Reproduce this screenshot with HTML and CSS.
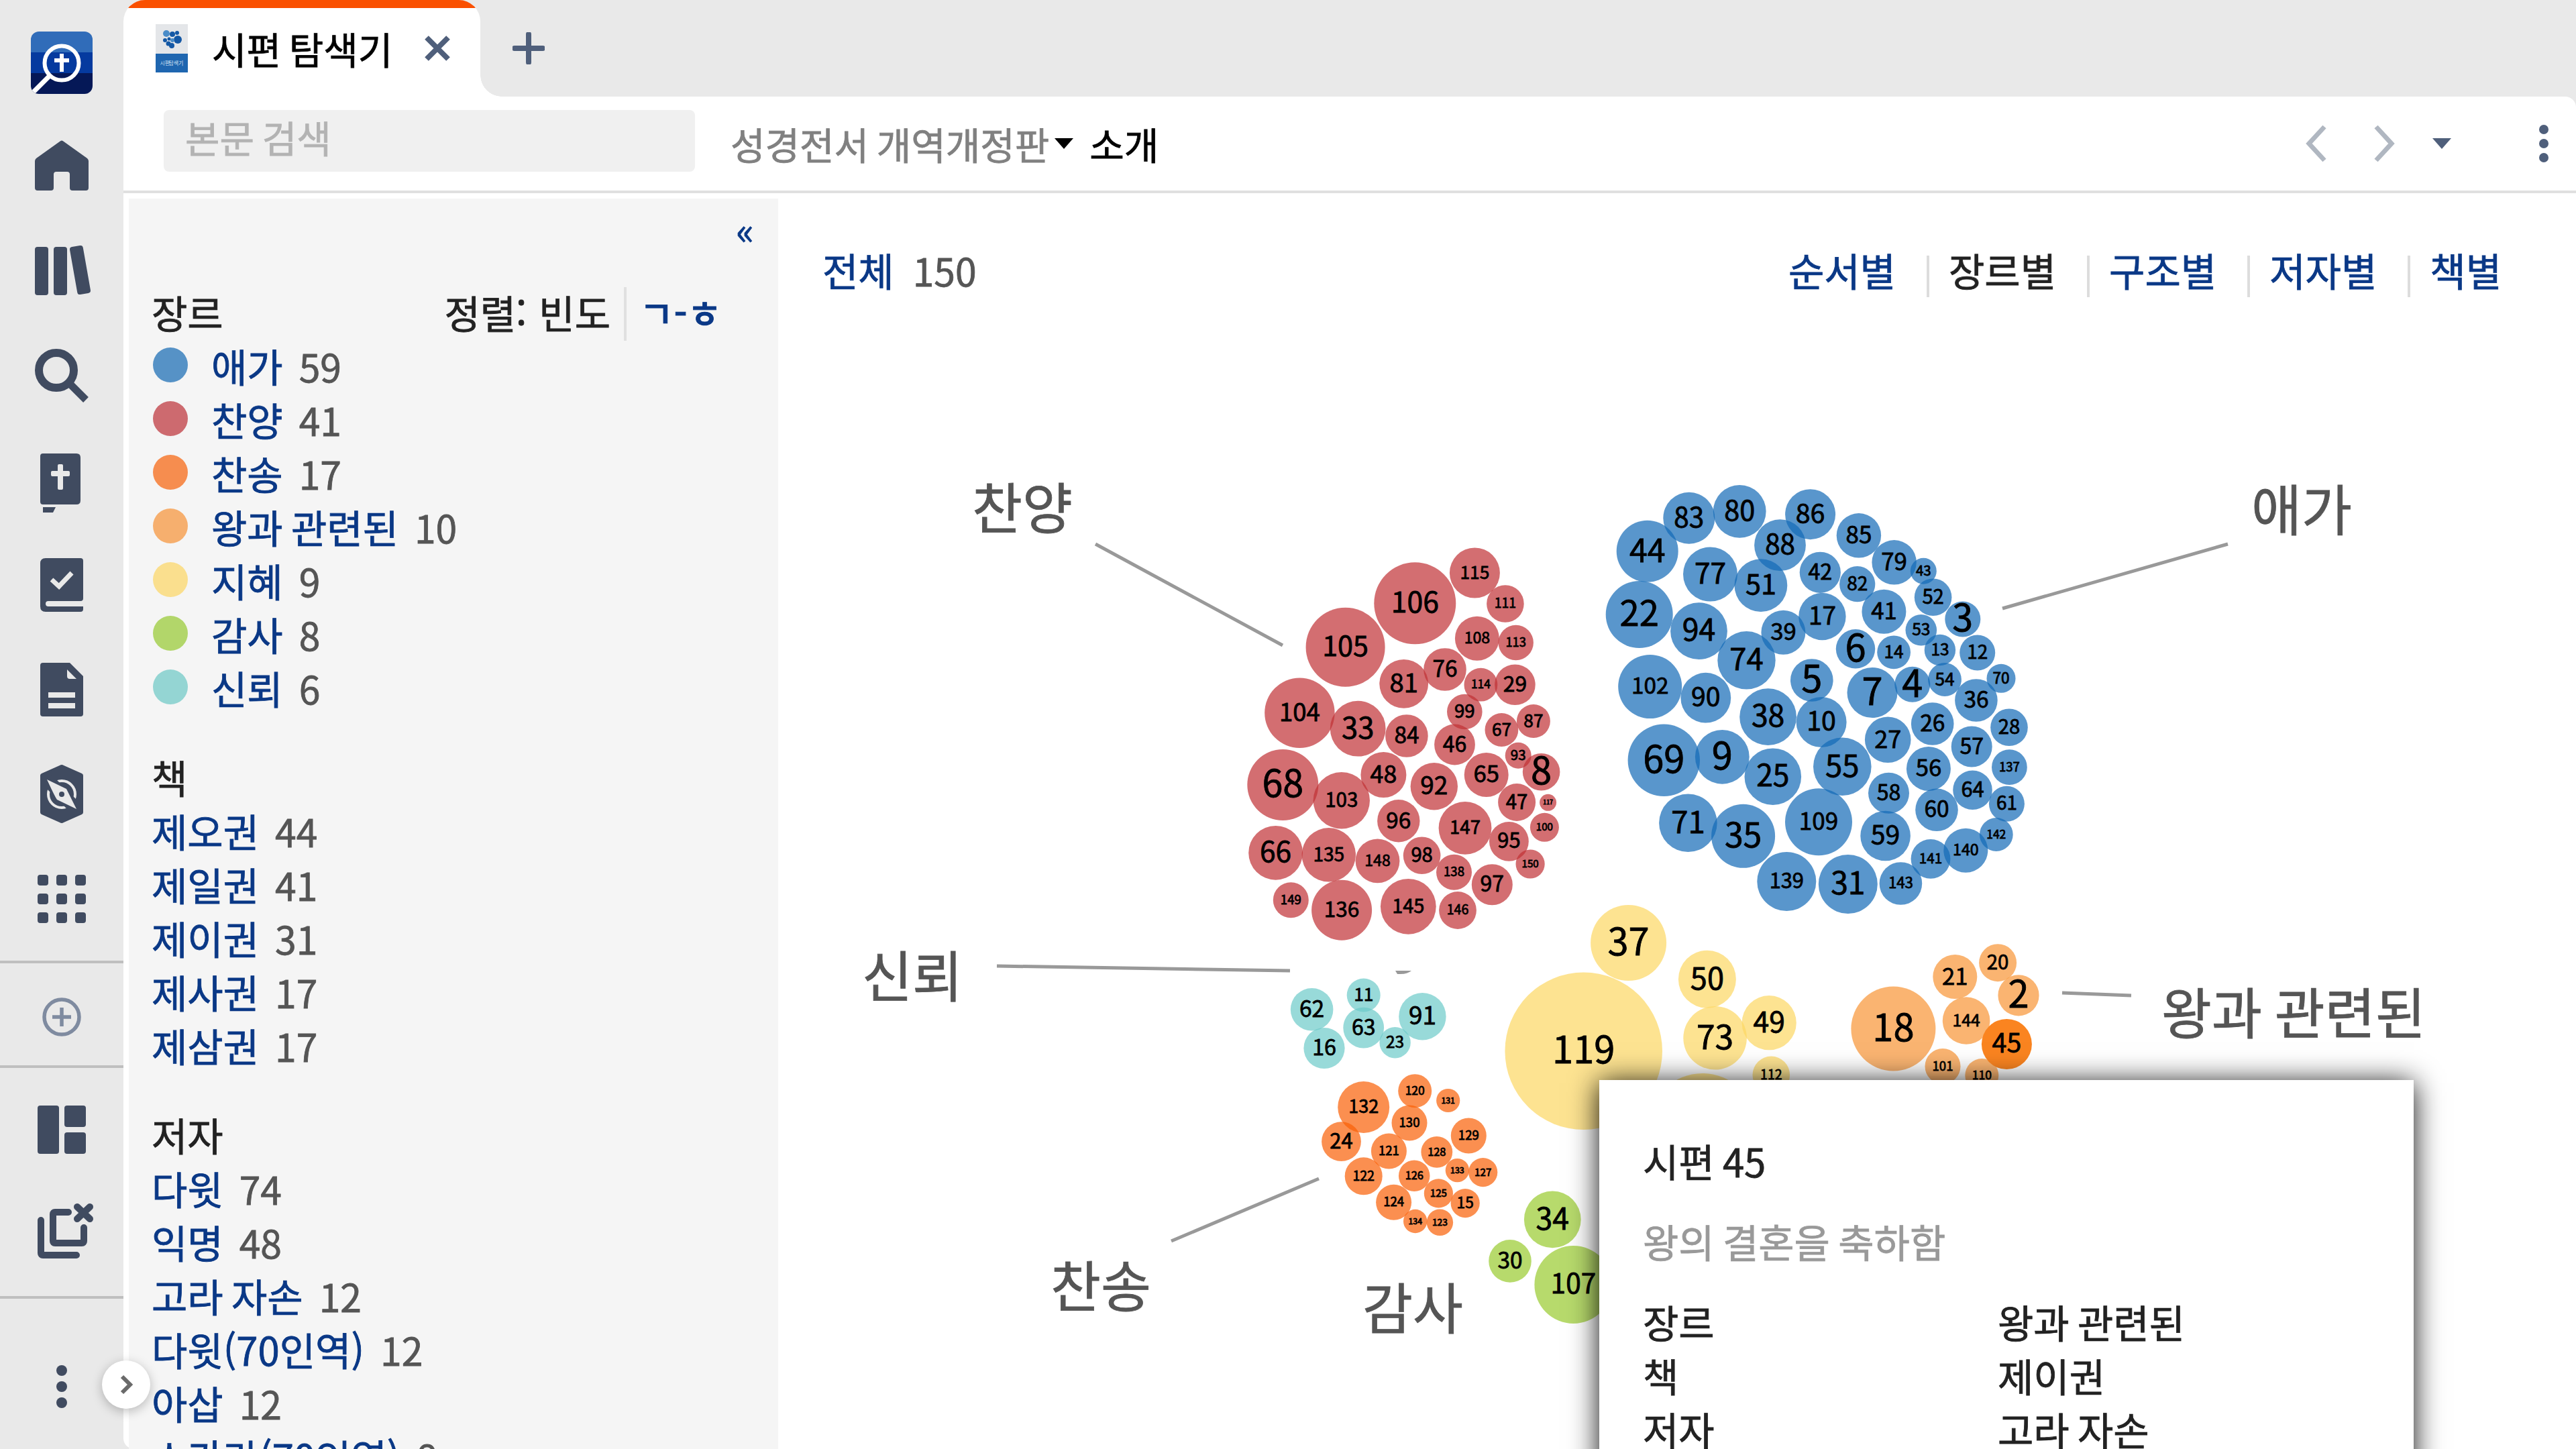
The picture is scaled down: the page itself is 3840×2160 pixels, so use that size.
FILE: index.html
```
<!DOCTYPE html>
<html lang="ko">
<head>
  <meta charset="UTF-8">
  <title>시편 탐색기</title>
  <link rel="stylesheet" href="styles.css">
</head>
<body>

<div class="app">
  <aside class="rail">
    <svg class="logo" viewBox="0 0 92 93">
      <clipPath id="logoClip"><rect width="92" height="93" rx="12"/></clipPath>
      <g clip-path="url(#logoClip)">
        <rect width="92" height="32" fill="#306cb9"/>
        <rect y="31" width="92" height="32" fill="#053a9f"/>
        <rect y="62" width="92" height="31" fill="#051857"/>
        <path d="M28 66L0 94" stroke="#fff" stroke-width="7"/>
        <circle cx="46" cy="47" r="25.5" fill="none" stroke="#fff" stroke-width="6"/>
        <path d="M46 33V60M35 43H57" stroke="#fff" stroke-width="6"/>
      </g>
    </svg>

    <nav class="rail-group">
      <svg class="icon" viewBox="0 0 96 96"><path d="M45 11q3-3 6 0L86 36q2 2 2 4V80q0 4-4 4H64q-4 0-4-4V60q0-4-4-4H40q-4 0-4 4V80q0 4-4 4H12q-4 0-4-4V40q0-2 2-4z"/></svg>
      <svg class="icon" viewBox="0 0 96 96"><rect x="8" y="12" width="20" height="72" rx="4"/><rect x="36" y="12" width="20" height="72" rx="4"/><rect x="65.500" y="10.500" width="20" height="72" rx="4" transform="rotate(-10 75.500 46.500)"/></svg>
      <svg class="icon" viewBox="0 0 96 96"><circle cx="40" cy="40" r="26" class="line thick"/><path d="M61 61L84 84" class="line thicker"/></svg>
      <svg class="icon" viewBox="0 0 96 96"><path d="M20 8H70q6 0 6 6V78q0 6-6 6H20q-4 0-4-4V12q0-4 4-4zM20 88H39L35 96H20z"/><path class="cut" d="M42 26q0-2 2-2h4q2 0 2 2v8h8q2 0 2 2v4q0 2-2 2h-8v18q0 2-2 2h-4q-2 0-2-2V42h-8q-2 0-2-2v-4q0-2 2-2h8z"/></svg>
      <svg class="icon" viewBox="0 0 96 96"><path d="M24 8H76q4 0 4 4V68q0 4-4 4H28q-4 0-4 4t4 4H80V84q0 4-4 4H24q-8 0-8-8V16q0-8 8-8z"/><path class="cutline" d="M33 40L44 50L63 30"/></svg>
      <svg class="icon" viewBox="0 0 96 96"><path d="M20 8H60L80 28V84q0 4-4 4H20q-4 0-4-4V12q0-4 4-4z"/><path class="cut" d="M56 18V28q0 4 4 4H70zM28 52H68V60H28zM28 68H68V76H28z"/></svg>
      <svg class="icon" viewBox="0 0 96 96"><path d="M45 5q3-2 6 0L78 17q2 1 2 3V75q0 2-2 3L51 90q-3 2-6 0L18 78q-2-1-2-3V20q0-2 2-3z"/><circle cx="48" cy="48" r="20" fill="none" stroke="#e9e9e9" stroke-width="4"/><path d="M26 26L70 70" stroke="#404b60" stroke-width="20"/><path class="cut" d="M26 26L55 40Q58 46 70 70L41 56Q38 52 26 26z"/><circle cx="48" cy="48" r="4"/></svg>
      <svg class="icon" viewBox="0 0 96 96"><path d="M12 16q0-4 4-4h8q4 0 4 4v8q0 4-4 4h-8q-4 0-4-4zM40 16q0-4 4-4h8q4 0 4 4v8q0 4-4 4h-8q-4 0-4-4zM68 16q0-4 4-4h8q4 0 4 4v8q0 4-4 4h-8q-4 0-4-4zM12 44q0-4 4-4h8q4 0 4 4v8q0 4-4 4h-8q-4 0-4-4zM40 44q0-4 4-4h8q4 0 4 4v8q0 4-4 4h-8q-4 0-4-4zM68 44q0-4 4-4h8q4 0 4 4v8q0 4-4 4h-8q-4 0-4-4zM12 72q0-4 4-4h8q4 0 4 4v8q0 4-4 4h-8q-4 0-4-4zM40 72q0-4 4-4h8q4 0 4 4v8q0 4-4 4h-8q-4 0-4-4zM68 72q0-4 4-4h8q4 0 4 4v8q0 4-4 4h-8q-4 0-4-4z"/></svg>
    </nav>

    <div class="rail-group rail-add">
      <svg class="icon" viewBox="0 0 96 96"><path d="M48 34V62M34 48H62" class="add"/><circle cx="48" cy="48" r="26" class="add"/></svg>
    </div>

    <div class="rail-group">
      <svg class="icon" viewBox="0 0 96 96"><rect x="12" y="12" width="32" height="72" rx="4"/><rect x="52" y="12" width="32" height="32" rx="4"/><rect x="52" y="52" width="32" height="32" rx="4"/></svg>
      <svg class="icon" viewBox="0 0 96 96"><path class="line" d="M58 15H38q-3 0-3 3V58q0 3 3 3H78q3 0 3-3V38M17 27V76q0 3 3 3H70M71 7L90 25M90 7L71 25"/></svg>
    </div>

    <div class="rail-group rail-more">
      <svg class="icon" viewBox="0 0 96 96"><circle cx="48" cy="24" r="8"/><circle cx="48" cy="48" r="8"/><circle cx="48" cy="72" r="8"/></svg>
    </div>

    <div class="expand">
      <svg width="20" height="32" viewBox="0 0 20 32"><path d="M4 4L16 16L4 28" fill="none" stroke="#6a6a6a" stroke-width="6"/></svg>
    </div>
  </aside>

  <div class="window">
    <div class="tabs">
      <div class="tab">
        <svg class="cover" viewBox="0 0 48 72">
          <rect width="48" height="72" fill="#e4e6e9"/>
          <rect y="44" width="48" height="28" fill="#1f66b0"/>
          <g fill="#1458a5">
            <circle cx="16" cy="14" r="5" fill="#4a8cc8"/><circle cx="25" cy="15" r="4"/><circle cx="32" cy="13" r="3"/>
            <circle cx="33" cy="23" r="6"/><circle cx="14" cy="24" r="3"/><circle cx="20" cy="22" r="2.500"/>
            <circle cx="19" cy="29" r="3.500"/><circle cx="24" cy="32" r="4"/><circle cx="25" cy="24" r="3" fill="#4a8cc8"/>
          </g>
          <text x="24" y="61" class="cover-title">시편 탐색기</text>
        </svg>
        <span class="tab-title">시편 탐색기</span>
        <svg width="38" height="38" viewBox="0 0 38 38"><path d="M3 3L35 35M35 3L3 35" class="ctl"/></svg>
      </div>
      <div class="tab-curve"></div>
      <svg class="tab-add" width="48" height="48" viewBox="0 0 48 48"><path d="M24 3V45M3 24H45" class="ctl round"/></svg>
    </div>

    <div class="toolbar">
      <div class="search">본문 검색</div>
      <span class="bible">성경전서 개역개정판</span>
      <svg class="arrow" width="28" height="16" viewBox="0 0 28 16"><path d="M0 0H28L14 16z"/></svg>
      <span class="intro">소개</span>
      <div class="history">
        <svg width="32" height="56" viewBox="0 0 32 56"><path d="M29 3L6 28L29 53" class="chev"/></svg>
        <svg width="32" height="56" viewBox="0 0 32 56"><path d="M3 3L26 28L3 53" class="chev"/></svg>
        <svg width="28" height="16" viewBox="0 0 28 16"><path d="M0 0H28L14 16z" fill="#4f5f7b"/></svg>
        <svg class="more" width="16" height="60" viewBox="0 0 16 60" fill="#4f5f7b"><circle cx="8" cy="9" r="7"/><circle cx="8" cy="30" r="7"/><circle cx="8" cy="51" r="7"/></svg>
      </div>
    </div>

    <div class="content">
      <section class="facets">
        <div class="fold">«</div>

        <div class="facet">
          <div class="facet-head">
            <span>장르</span>
            <span class="sort">정렬: 빈도</span>
            <a class="alpha">ㄱ-ㅎ</a>
          </div>
          <div class="row"><i class="dot lament"></i><a>애가</a><span>59</span></div>
          <div class="row"><i class="dot praise"></i><a>찬양</a><span>41</span></div>
          <div class="row"><i class="dot hymn"></i><a>찬송</a><span>17</span></div>
          <div class="row"><i class="dot royal"></i><a>왕과 관련된</a><span>10</span></div>
          <div class="row"><i class="dot wisdom"></i><a>지혜</a><span>9</span></div>
          <div class="row"><i class="dot thanks"></i><a>감사</a><span>8</span></div>
          <div class="row"><i class="dot trust"></i><a>신뢰</a><span>6</span></div>
        </div>

        <div class="facet">
          <div class="facet-head">책</div>
          <div class="row"><a>제오권</a><span>44</span></div>
          <div class="row"><a>제일권</a><span>41</span></div>
          <div class="row"><a>제이권</a><span>31</span></div>
          <div class="row"><a>제사권</a><span>17</span></div>
          <div class="row"><a>제삼권</a><span>17</span></div>
        </div>

        <div class="facet">
          <div class="facet-head">저자</div>
          <div class="row"><a>다윗</a><span>74</span></div>
          <div class="row"><a>익명</a><span>48</span></div>
          <div class="row"><a>고라 자손</a><span>12</span></div>
          <div class="row"><a>다윗(70인역)</a><span>12</span></div>
          <div class="row"><a>아삽</a><span>12</span></div>
          <div class="row"><a>스가랴(70인역)</a><span>8</span></div>
        </div>
      </section>

      <main class="explorer">
        <div class="views">
          <a>전체</a><span class="total">150</span>
          <div class="modes">
            <a>순서별</a><a class="on">장르별</a><a>구조별</a><a>저자별</a><a>책별</a>
          </div>
        </div>
        <svg class="chart" viewBox="1160 480 2680 1680" id="chart">
          <g class="leaders">
            <path d="M1633 811L1912 962M3321 811L2985 907M1486 1440L1923 1447M1746 1850L1966 1757M3074 1480L3177 1484"/>
            <path class="bit" d="M2080 1447H2104Q2098 1452 2088 1452H2083z"/>
          </g>
          <g class="names">
            <text x="1449" y="788">찬양</text>
            <text x="3356" y="791">애가</text>
            <text x="1285" y="1486">신뢰</text>
            <text x="1566" y="1948">찬송</text>
            <text x="2031" y="1981">감사</text>
            <text x="3222" y="1541">왕과 관련된</text>
          </g>
        </svg>

        <div class="card">
          <div class="card-title">시편 45</div>
          <div class="card-sub">왕의 결혼을 축하함</div>
          <div class="card-rows">
            <span>장르</span><span>왕과 관련된</span>
            <span>책</span><span>제이권</span>
            <span>저자</span><span>고라 자손</span>
          </div>
        </div>
      </main>
    </div>
  </div>
</div>

<script src="script.js"></script>
</body>
</html>
```
FILE: styles.css
```
* {
  box-sizing: border-box;
}
body {
  margin: 0;
  background: #e9e9e9;
  color: #222;
  font-family: "Noto Sans CJK KR", sans-serif;
  font-size: 58px;
  word-spacing: -0.07em;
  -webkit-text-stroke: 0.8px;
  overflow: hidden;
}
svg {
  display: block;
  flex: none;
}
a {
  color: #0a3886;
}
.app {
  display: flex;
  width: 3840px;
  height: 2160px;
  overflow: hidden;
}

/* left rail */
.rail {
  position: relative;
  width: 184px;
  flex: none;
  padding-top: 47px;
  display: flex;
  flex-direction: column;
  align-items: center;
}
.logo {
  width: 92px;
  height: 93px;
  margin-bottom: 16px;
}
.rail-group {
  width: 184px;
  padding: 14px 44px;
  display: flex;
  flex-direction: column;
}
.rail-group + .rail-group {
  border-top: 4px solid #bfbfbf;
}
.icon {
  width: 96px;
  height: 96px;
  margin: 30px 0;
  fill: #404b60;
}
.icon .line {
  fill: none;
  stroke: #404b60;
  stroke-width: 10;
  stroke-linecap: round;
}
.rail .rail-add {
  height: 156px;
  padding-top: 2px;
  padding-bottom: 0;
}
.rail .rail-more {
  padding-top: 53px;
}
.icon .thick { stroke-width: 12; }
.icon .thicker { stroke-width: 11; stroke-linecap: butt; }
.icon .add { fill: none; stroke: #7f8ba0; stroke-width: 5.5; }
.icon .cut { fill: #e9e9e9; }
.icon .cutline { fill: none; stroke: #e9e9e9; stroke-width: 7; }
.expand {
  position: absolute;
  z-index: 2;
  left: 152px;
  top: 2028px;
  width: 72px;
  height: 72px;
  border-radius: 50%;
  background: #fff;
  box-shadow: 0 4px 16px rgba(0, 0, 0, 0.25);
  display: flex;
  align-items: center;
  justify-content: center;
}

/* tabs */
.window {
  flex: 1;
  display: flex;
  flex-direction: column;
}
.tabs {
  height: 144px;
  display: flex;
}
.tab {
  width: 532px;
  display: flex;
  align-items: center;
  padding: 0 45px 0 48px;
  border-radius: 32px 32px 0 0;
  background: linear-gradient(#fa5000 12px, #fff 12px);
}
.cover {
  width: 48px;
  height: 72px;
}
.cover-title {
  font-size: 8px;
  fill: #cfe0f2;
  text-anchor: middle;
}
.tab-title {
  margin-left: 36px;
  margin-right: auto;
  color: #000;
  font-size: 56px;
  line-height: 80px;
  padding-bottom: 1px;
}
.tab-curve {
  align-self: flex-end;
  width: 32px;
  height: 32px;
  background: radial-gradient(circle at 100% 0, transparent 31.5px, #fff 32px);
}
.tab-add {
  margin: 48px 0 0 16px;
}
.ctl {
  stroke: #4f5f7b;
  stroke-width: 8;
}
.round {
  stroke-linecap: round;
}

/* toolbar */
.toolbar {
  height: 144px;
  padding: 0 40px 0 60px;
  display: flex;
  align-items: center;
  background: #fff;
  border-bottom: 4px solid #e0e0e0;
  border-top-right-radius: 16px;
  font-size: 56px;
  line-height: 80px;
}
.search {
  width: 792px;
  height: 92px;
  margin-bottom: 8px;
  padding: 0 32px;
  border-radius: 8px;
  background: #f0f0f0;
  color: #b3b3b3;
}
.bible {
  margin-left: 53px;
  padding-bottom: 1px;
  color: #808080;
}
.arrow {
  margin-left: 8px;
}
.intro {
  margin-left: 24px;
  padding-bottom: 1px;
  color: #000;
}
.history {
  margin-left: auto;
  display: flex;
  align-items: center;
}
.history svg:nth-child(2) { margin-left: 71px; }
.history svg:nth-child(3) { margin-left: 55px; }
.history .more { margin-left: 130px; }
.chev {
  fill: none;
  stroke: #b0b7c1;
  stroke-width: 7;
}

/* facet list */
.content {
  flex: 1;
  display: flex;
  min-height: 0;
  background: #fff;
  border-bottom-left-radius: 16px;
}
.facets {
  width: 968px;
  margin: 8px 0 0 8px;
  padding: 0 34px;
  background: #f5f5f5;
  overflow: hidden;
}
.fold {
  height: 129px;
  padding: 10px 2px 0;
  line-height: 70px;
  text-align: right;
  color: #0a3886;
  font-size: 56px;
}
.facet {
  margin-bottom: 53px;
}
.facet-head,
.row {
  display: flex;
  height: 80px;
  line-height: 80px;
  white-space: nowrap;
}
.sort {
  margin-left: auto;
  padding-right: 20px;
  word-spacing: 0.03em;
}
.alpha {
  width: 196px;
  height: 80px;
  margin-top: 3px;
  padding-left: 19px;
  line-height: 74px;
  border-left: 4px solid #e0e0e0;
  font-size: 56px;
  font-weight: 500;
}
.row span {
  margin-left: 24px;
  color: #555;
  font-size: 57px;
}
.dot {
  width: 52px;
  height: 52px;
  margin: 13px 35px 0 2px;
  border-radius: 50%;
}
.dot.lament { background: #5692c6; }
.dot.praise { background: #cd6a6f; }
.dot.hymn { background: #f68d4f; }
.dot.royal { background: #f6af6e; }
.dot.wisdom { background: #fadf8e; }
.dot.thanks { background: #b2d66a; }
.dot.trust { background: #94d5d3; }

/* explorer */
.explorer {
  position: relative;
  flex: 1;
}
.views {
  display: flex;
  height: 192px;
  padding: 74px 111px 0 66px;
  line-height: 80px;
}
.total {
  margin-left: 28px;
  color: #555;
  font-size: 57px;
}
.modes {
  margin-left: auto;
  display: flex;
}
.modes a + a {
  margin-left: 46px;
  padding-left: 33px;
  background: linear-gradient(#ddd, #ddd) 0 19px / 4px 62px no-repeat;
}
.modes .on {
  color: #222;
}
.chart {
  width: 2680px;
  height: 1680px;
}
.leaders {
  fill: none;
  stroke: #999;
  stroke-width: 5;
}
.leaders .bit {
  fill: #999;
  stroke: none;
}
.names {
  font-size: 81.5px;
  fill: #555;
  stroke: #555;
  stroke-width: 0.8;
}
.bubble text {
  text-anchor: middle;
  stroke: #000;
  stroke-width: 0.8;
}
.bubble.lament { --c: #126ab7; }
.bubble.praise { --c: #c03034; }
.bubble.hymn { --c: #f96005; }
.bubble.royal { --c: #f89434; }
.bubble.wisdom { --c: #fcd763; }
.bubble.thanks { --c: #98cb2e; }
.bubble.trust { --c: #6ccac9; }
.bubble circle {
  fill: var(--c);
  fill-opacity: 0.7;
}
.bubble circle.active {
  fill: #fa8420;
  fill-opacity: 1;
}

/* hover card */
.card {
  position: absolute;
  left: 1224px;
  top: 1322px;
  width: 1214px;
  height: 700px;
  padding: 80px 65px;
  background: #fff;
  box-shadow: 0 4px 40px rgba(0, 0, 0, 0.95);
  line-height: 80px;
}
.card-sub {
  margin: 40px 0;
  color: #999;
}
.card-rows {
  display: grid;
  grid-template-columns: 529px 1fr;
}
```
FILE: script.js
```
// psalm, x, y, radius
const genres = {
  praise: [
    [115,2198.4,854,37.5],[106,2109.3,899.3,61],[111,2243.9,900,27.8],[105,2005.6,964.7,59],
    [108,2201.9,951.7,33],[113,2259.7,958,26.2],[76,2154,998,31.8],[81,2092.7,1019.3,36.4],
    [114,2207.4,1020.7,24.9],[29,2258.4,1020.7,30.3],[104,1937.4,1062.7,52.2],[33,2024.2,1086.2,41.4],
    [84,2096.9,1097,31.8],[99,2183.3,1061,26.3],[67,2238.4,1088,24.9],[87,2285.9,1075,25],
    [46,2168.5,1110,30.4],[93,2263.2,1126.3,19.5],[68,1912.3,1170,53],[103,1999.8,1193.3,42.2],
    [48,2062.4,1155,34],[92,2137.8,1172.3,35.2],[65,2215.7,1155,33],[8,2297.6,1150.7,27.8],
    [47,2261.1,1196,28],[117,2307.6,1196.3,12.5],[96,2084.8,1223.7,31.7],[147,2184,1234.3,39.4],
    [95,2249.4,1254.3,29.4],[100,2302.4,1233.3,21.5],[66,1901.6,1271.3,40.4],[135,1980.8,1274.3,40.2],
    [148,2053.5,1283.3,32.9],[98,2119.6,1275.3,27.8],[138,2167.5,1300.3,26.5],[150,2281.1,1288,21.6],
    [97,2224.3,1318.7,30.5],[149,1924.3,1341.7,26.5],[136,2000.1,1356.7,45],[145,2099.3,1351.3,41.4],
    [146,2173,1357,27.9]
  ],
  lament: [
    [83,2517.8,772.3,38.5],[80,2593.2,762.3,39.4],[86,2698.6,766.7,37.5],[88,2653.5,812.7,38.4],
    [85,2770.9,798.3,33.2],[44,2455.7,821.7,46],[77,2549.5,856,40.5],[51,2624.9,872.7,39.4],
    [42,2713.3,853.3,30.6],[82,2768.7,870.7,26.6],[79,2823.6,838.3,33.2],[43,2867.3,851.3,19.5],
    [52,2881.6,890.3,27.8],[22,2443.7,916,50],[94,2532.5,940.7,42.4],[39,2658.4,942.7,33],
    [17,2716.4,919,35.2],[41,2808.4,911.7,33],[53,2863.8,939.3,23.3],[3,2925.8,923,26.5],
    [74,2603.5,984.3,43.2],[6,2766,967.3,29.2],[14,2823.1,972.3,24.9],[13,2891.9,969,23.2],
    [12,2947.7,973,26.5],[70,2983,1011.3,21.5],[5,2700.8,1014,31.8],[102,2459.7,1023.5,47.5],
    [90,2542.8,1040.2,37.4],[7,2791,1032.5,37.5],[4,2850.8,1020.3,26.5],[54,2899,1013,24.9],
    [36,2945.9,1044,31.8],[38,2635.6,1068.7,42.4],[10,2715.1,1076.5,37.5],[26,2880.7,1079,31.8],
    [28,2995,1084.3,27.8],[27,2814.2,1102.7,34.3],[57,2939.2,1113,30.5],[69,2480.3,1133.3,53.7],
    [9,2567.3,1128.3,40.4],[25,2642.8,1157.7,42.3],[55,2746.3,1142.7,43.3],[56,2874.9,1146,33],
    [137,2995.4,1143.7,26.4],[58,2815.5,1182.3,30.5],[64,2940.5,1177.7,29.3],[61,2991.4,1198.3,26.5],
    [71,2516.4,1226.7,43.3],[35,2598.6,1246.3,47.5],[109,2711,1225.3,50],[59,2810.6,1246,37.3],
    [60,2887,1207.3,31.8],[142,2975.8,1244,24.9],[140,2930.3,1267.7,33],[141,2878,1280.3,29.4],
    [139,2663.3,1314,44],[31,2754.8,1318,44],[143,2833.4,1317,31.8]
  ],
  wisdom: [
    [37,2427.6,1405.5,56.5],[50,2544.9,1459.7,43],[119,2360.7,1566.8,117.3],[73,2556.6,1547.3,47.3],
    [49,2637.2,1524.7,40.6],[112,2640.3,1602.4,27.8],["",2537.8,1680,80]
  ],
  trust: [
    [62,1955.6,1504.8,31.8],[11,2032.7,1483.5,25],[63,2032.7,1532.1,30.4],[91,2120.4,1515.2,35.2],
    [23,2079.6,1554.2,23.2],[16,1974,1562.5,30.6]
  ],
  hymn: [
    [132,2032.7,1650.5,38.5],[120,2109.2,1626.2,25],[131,2158.7,1640.5,17.6],[24,1999.5,1701.7,29.4],
    [130,2101,1673.9,26.5],[129,2189.3,1693,26.5],[121,2070.4,1716,26.5],[128,2141.8,1717.3,23.4],
    [122,2032.7,1753.3,28],[126,2108.2,1752.8,23.3],[133,2172.4,1744.6,17.7],[127,2210.7,1747.6,21.6],
    [124,2077.6,1792.3,26.5],[125,2144.4,1778.9,21.6],[15,2184.2,1793.6,21.6],[134,2109.7,1820.5,17.7],
    [123,2146.4,1822.2,19.7]
  ],
  thanks: [
    [34,2314.3,1817.9,42.4],[30,2251,1879.9,31.8],[107,2345.4,1915,58]
  ],
  royal: [
    [18,2822.4,1533.5,63],[21,2914.3,1456.1,33],[20,2978.1,1435.2,28],[2,3009,1483.8,30.6],
    [144,2931.1,1521.5,35.3],[101,2896,1589.5,26.5],[110,2954.3,1603,25],[45,2991.4,1556.5,37.5]
  ]
};

const SVG = "http://www.w3.org/2000/svg";
const chart = document.getElementById("chart");

function add(parent, name, attrs) {
  const el = document.createElementNS(SVG, name);
  for (const key in attrs) el.setAttribute(key, attrs[key]);
  parent.appendChild(el);
  return el;
}

for (const genre in genres) {
  const group = add(chart, "g", { class: "bubble " + genre });
  for (const [psalm, cx, cy, r] of genres[genre]) {
    add(group, "circle", { cx, cy, r, class: psalm === 45 ? "active" : "" });
  }
  for (const [psalm, cx, cy, r] of genres[genre]) {
    if (!psalm) continue;
    // the number shrinks with its bubble
    const size = Math.min(56, 2.1 * r / String(psalm).length);
    const label = add(group, "text", { x: cx, y: cy + size * 0.33, "font-size": size });
    label.textContent = psalm;
  }
}
```
